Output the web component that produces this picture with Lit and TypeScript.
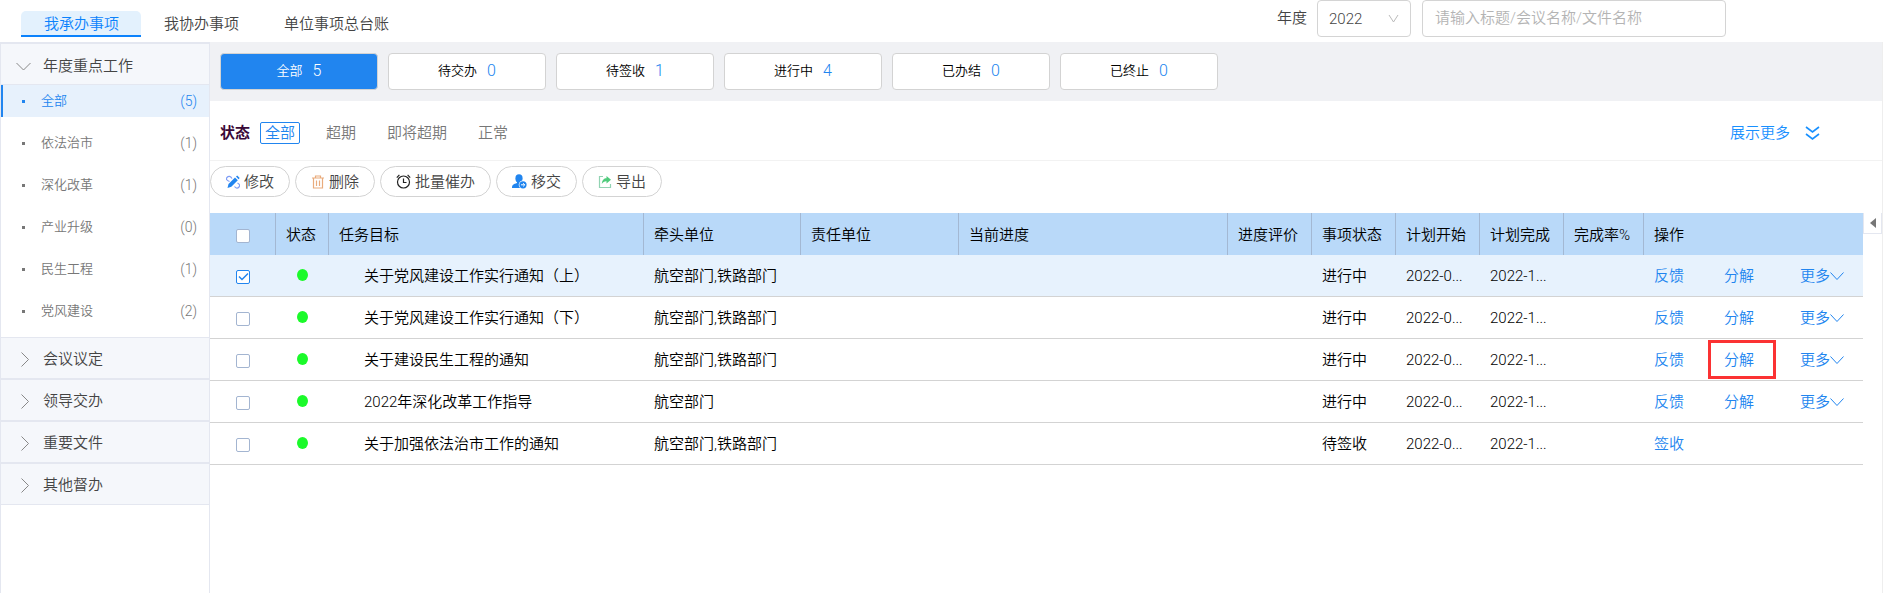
import { LitElement, html, css, svg } from "lit";
import { customElement, state } from "lit/decorators.js";

interface Task { name: string; unit: string; state: string; signed: boolean; marked?: boolean; }

const TABS = ["我承办事项", "我协办事项", "单位事项总台账"];
const CATEGORIES: [string, number][] = [["全部", 5], ["依法治市", 1], ["深化改革", 1], ["产业升级", 0], ["民生工程", 1], ["党风建设", 2]];
const GROUPS = ["会议议定", "领导交办", "重要文件", "其他督办"];
const COUNTS: [string, number][] = [["全部", 5], ["待交办", 0], ["待签收", 1], ["进行中", 4], ["已办结", 0], ["已终止", 0]];
const STATES = ["全部", "超期", "即将超期", "正常"];
const COLUMNS: [string, string][] = [["w66", ""], ["w53", "状态"], ["w315", "任务目标"], ["w157", "牵头单位"], ["w158", "责任单位"], ["", "当前进度"], ["w84", "进度评价"], ["w84", "事项状态"], ["w84", "计划开始"], ["w84", "计划完成"], ["w80", "完成率%"], ["w219", "操作"]];
const TASKS: Task[] = [
  { name: "关于党风建设工作实行通知（上）", unit: "航空部门,铁路部门", state: "进行中", signed: true },
  { name: "关于党风建设工作实行通知（下）", unit: "航空部门,铁路部门", state: "进行中", signed: true },
  { name: "关于建设民生工程的通知", unit: "航空部门,铁路部门", state: "进行中", signed: true, marked: true },
  { name: "2022年深化改革工作指导", unit: "航空部门", state: "进行中", signed: true },
  { name: "关于加强依法治市工作的通知", unit: "航空部门,铁路部门", state: "待签收", signed: false },
];

const icon = (body: unknown, w = 14, h = 14) => html`<svg width=${w} height=${h} viewBox="0 0 ${w} ${h}" fill="none" aria-hidden="true">${body}</svg>`;

const ACTIONS: [string, unknown][] = [
  ["修改", icon(svg`<path d="M2.500 9 9 2.500 11.800 5.300 5.300 11.800 1.500 13z" fill="#2185ef"/><path d="M10 1.500 11.200.5l2.500 2.500-1.200 1.200z" fill="#2185ef"/><path d="M6 3.500C4.500 1 2.500.8 1 2.500s0 3 2.500 4M8.500 11.500c1.500 2 3.200 2 4.500.5s.5-3-1.500-4" stroke="#7f9df5" stroke-width="1.200"/>`)],
  ["删除", icon(svg`<path d="M1 3h12M4.500 3V1h5v2M2.500 3v10h9V3M5.500 5.500v5.500M8.500 5.500v5.500" stroke="#e9ab7c" stroke-width="1.200"/>`)],
  ["批量催办", icon(svg`<circle cx="7.500" cy="8" r="6" stroke="#222" stroke-width="1.200"/><path d="M7.500 4.500v4h3M.8 3.600 3.400.9M11.600.9l2.600 2.700" stroke="#222" stroke-width="1.200"/>`, 15, 15)],
  ["移交", icon(svg`<ellipse cx="7" cy="4.500" rx="3.600" ry="4.200" fill="#2185ef"/><path d="M5 7h4l1 2.500-2 4.500H0c0-3 1.500-4 5-5z" fill="#2185ef"/><circle cx="11" cy="10.800" r="4.300" fill="#fff"/><circle cx="11" cy="10.800" r="3.600" fill="#2185ef"/><path d="M9 10.800h3.500M11.200 9.200l1.600 1.600-1.600 1.600" stroke="#fff"/>`, 15, 15)],
  ["导出", icon(svg`<path d="M5 1.500H1.500v11h11V9" stroke="#92d3b3" stroke-width="1.200"/><path d="M3.800 9C4 5 6 3.200 8.500 3.200V1L13 4.800 8.500 8.500V6.300C6.500 6.200 5 7 3.800 9z" fill="#4fcb7c"/>`)],
];

@customElement("app-root")
export class AppRoot extends LitElement {
  @state() private picked = new Set<number>([0]);

  static styles = css`
    :host { display: flex; flex-direction: column; min-height: 100vh; background: #fff; color: #000;
      font: 350 15px/20px Roboto, "Noto Sans CJK SC", sans-serif; }
    * { box-sizing: border-box; }
    button, input, select { font: inherit; color: inherit; }
    button { padding: 0; border: 0; background: none; cursor: pointer; white-space: nowrap; }
    a { color: #2185ef; text-decoration: none; white-space: nowrap; }
    svg { flex: none; display: block; }
    .top { display: flex; justify-content: space-between; height: 42px; color: #444; }
    .tabs { display: flex; align-items: flex-start; padding: 11px 0 0 21px; }
    .tab { height: 26px; padding: 1px 22px 0 23px; border-bottom: 2px solid transparent; border-radius: 5px 5px 0 0; }
    .tab.on { color: #0b82fc; background: #e3f1fd; border-bottom-color: #0b82fc; }
    .search { display: flex; align-items: flex-start; padding-right: 157px; }
    .search label { padding: 8px 10px 0 0; }
    .year { position: relative; margin-right: 11px; }
    .year svg { position: absolute; right: 12px; top: 14px; pointer-events: none; }
    .year select, .query { height: 37px; border: 1px solid #d4d4d4; border-radius: 4px; background: #fff; outline: 0; }
    .year select { width: 94px; padding: 0 11px; appearance: none; }
    .query { width: 304px; padding: 0 12px 2px; }
    .query::placeholder { color: #b4b4b4; opacity: 1; }
    .body { display: flex; flex: 1; }
    .side { flex: none; width: 210px; border: 1px solid #e4e7f0; border-width: 2px 1px 0; }
    .group { display: flex; align-items: center; width: 100%; height: 42px; padding: 2px 0 0 19px; gap: 12px; border: 0 solid #e4e7f0; border-width: 1px 0; background: #f5f7fb; color: #444; }
    .group.open { height: 41px; padding: 4px 0 0 15px; border-top: 0; }
    .cats { list-style: none; margin: 0; padding: 0; }
    .cat { display: flex; align-items: center; width: 100%; height: 32px; margin-bottom: 10px; padding: 0 12px 0 19px; border-left: 2px solid transparent; font-size: 13px; color: #777; }
    .cat::before { content: ""; width: 3px; height: 3px; margin-right: 16px; background: currentColor; }
    .cat .n { margin-left: auto; font-size: 14px; }
    .cat.on { color: #2185ef; background: #e7f1fc; border-left-color: #2185ef; }
    .main { flex: 1; min-width: 0; border-right: 1px solid #eee; }
    .counts { display: flex; gap: 10px; padding: 11px 10px; height: 59px; background: #f0f1f4; }
    .count { display: flex; justify-content: center; align-items: center; gap: 10px; width: 158px; height: 37px; padding-bottom: 2px; border: 1px solid #d3d3d3; border-radius: 4px; background: #fff; font-size: 13px; }
    .count .n { font-size: 16px; color: #2185ef; }
    .count.on, .count.on .n { background: #2185ef; color: #fff; }
    .filter { display: flex; align-items: center; height: 60px; padding: 4px 62px 0 10px; border-bottom: 1px solid #f2f2f2; color: #777; }
    .filter b { margin-right: 10px; font-weight: 700; color: #3a0838; }
    .opt { height: 22px; margin-right: 21px; padding: 0 4px; border: 1px solid transparent; border-radius: 2px; line-height: 20px; }
    .opt.on { border-color: #2185ef; color: #2185ef; }
    .more { display: flex; align-items: center; gap: 15px; margin-left: auto; color: #1890ff; }
    .tools { display: flex; gap: 5px; padding: 5px 0 16px; color: #444; }
    .tool { display: flex; align-items: center; gap: 4px; height: 31px; padding: 0 15px; border: 1px solid #d3d3d3; border-radius: 16px; }
    .grid { display: flex; align-items: flex-start; }
    table { flex: 1; min-width: 0; table-layout: fixed; border-collapse: separate; border-spacing: 0; width: 100%; }
    th, td { height: 42px; padding: 1px 0 0 10px; text-align: left; font-weight: inherit; white-space: nowrap; }
    th { background: #b9d9f9; border-right: 1px solid #a3b8d3; }
    th:last-child { border-right: 0; }
    td { border-bottom: 1px solid #d3d3d3; }
    .picked td { background: #e7f2fd; }
    .w66 { width: 66px; } .w53 { width: 53px; } .w315 { width: 315px; } .w157 { width: 157px; } .w158 { width: 158px; } .w84 { width: 84px; } .w80 { width: 80px; } .w219 { width: 219px; }
    .check { padding: 3px 0 0; text-align: center; }
    .check input { appearance: none; display: block; width: 14px; height: 14px; margin: 0 auto; border: 1px solid #a3b5d1; border-radius: 2px; background: #fff; }
    .check input:checked { border-color: #2185ef; background: #fff url("data:image/svg+xml,%3Csvg xmlns='http://www.w3.org/2000/svg' viewBox='0 0 12 12' fill='none' stroke='%232185ef' stroke-width='1.500'%3E%3Cpath d='M2 5.500 5 8.500 11 2.500'/%3E%3C/svg%3E"); }
    .state { padding: 0 0 2px 21px; }
    .dot { display: block; width: 11px; height: 12px; border-radius: 50%; background: #1bfa2a; }
    .name { padding-left: 35px; }
    .acts { padding-top: 0; padding-bottom: 0; }
    .ops { display: flex; align-items: center; }
    .ops a { display: flex; align-items: center; }
    .ops .split { width: 68px; height: 39px; margin: 0 24px; padding-left: 13px; border: 3px solid transparent; }
    .ops .marked { border-color: #fb3233; }
    .fold { flex: none; display: flex; justify-content: center; align-items: center; width: 19px; height: 21px; border: 1px solid #e4e7f0; border-top: 0; }
  `;

  private toggle(i: number) {
    const next = new Set(this.picked);
    if (!next.delete(i)) next.add(i);
    this.picked = next;
  }

  private row(t: Task, i: number) {
    const on = this.picked.has(i);
    return html`<tr class=${on ? "picked" : ""}>
      <td class="check"><input type="checkbox" aria-label=${t.name} .checked=${on} @change=${() => this.toggle(i)}></td>
      <td class="state"><span class="dot"></span></td>
      <td class="name">${t.name}</td><td>${t.unit}</td><td></td><td></td><td></td>
      <td>${t.state}</td><td>2022-0...</td><td>2022-1...</td><td></td>
      <td class="acts"><div class="ops">${t.signed ? html`<a href="#">反馈</a>
        <a href="#" class="split ${t.marked ? "marked" : ""}">分解</a>
        <a href="#">更多${icon(svg`<path d="m.5 3.500 6.500 7 6.500-7" stroke="#2185ef"/>`)}</a>` : html`<a href="#">签收</a>`}</div></td>
    </tr>`;
  }

  render() {
    return html`
      <header class="top">
        <nav class="tabs">${TABS.map((t, i) => html`<button class="tab ${i ? "" : "on"}">${t}</button>`)}</nav>
        <div class="search">
          <label for="year">年度</label>
          <div class="year"><select id="year"><option>2022</option></select>${icon(svg`<path d="m1 1 4.500 7L10 1" stroke="#bbb"/>`, 11, 9)}</div>
          <input class="query" aria-label="搜索" placeholder="请输入标题/会议名称/文件名称">
        </div>
      </header>
      <div class="body">
        <aside class="side">
          <button class="group open">${icon(svg`<path d="m.5 1 7 7 7-7" stroke="#888"/>`, 15, 9)}年度重点工作</button>
          <ul class="cats">${CATEGORIES.map(([t, n], i) => html`<li><button class="cat ${i ? "" : "on"}">${t}<span class="n">(${n})</span></button></li>`)}</ul>
          ${GROUPS.map(g => html`<button class="group">${icon(svg`<path d="m1.500.5 7 7-7 7" stroke="#888"/>`, 11, 15)}${g}</button>`)}
        </aside>
        <main class="main">
          <div class="counts">${COUNTS.map(([t, n], i) => html`<button class="count ${i ? "" : "on"}">${t}<span class="n">${n}</span></button>`)}</div>
          <div class="filter"><b>状态</b>${STATES.map((t, i) => html`<button class="opt ${i ? "" : "on"}">${t}</button>`)}
            <button class="more">展示更多${icon(svg`<path d="m1 1 6.500 5L14 1M1 8l6.500 5L14 8" stroke="#1890ff" stroke-width="1.600"/>`, 15, 14)}</button></div>
          <div class="tools">${ACTIONS.map(([t, g]) => html`<button class="tool">${g}${t}</button>`)}</div>
          <div class="grid">
            <table>
              <thead><tr>${COLUMNS.map(([w, t], i) => html`<th class="${w} ${i ? "" : "check"}">${i ? t : html`<input type="checkbox" aria-label="全选">`}</th>`)}</tr></thead>
              <tbody>${TASKS.map((t, i) => this.row(t, i))}</tbody>
            </table>
            <button class="fold" aria-label="展开">${icon(svg`<path d="M6 0v10L0 5z" fill="#777"/>`, 6, 10)}</button>
          </div>
        </main>
      </div>`;
  }
}
